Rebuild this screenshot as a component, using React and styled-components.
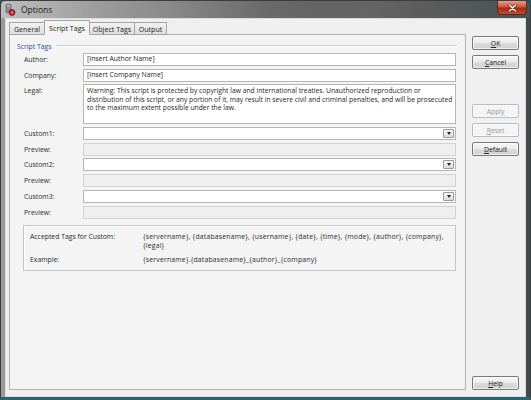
import React from "react";
import styled, { createGlobalStyle } from "styled-components";

const GlobalStyle = createGlobalStyle`
    html, body {
        margin: 0;
        padding: 0;
        background: #1f5b66;
    }
    body {
        font-family: 'Open Sans', 'Liberation Sans', Arial, sans-serif;
        font-size: 6.85px;
        color: #1e1e1e;
    }
`

const Window = styled.div`
    width: 531px;
    height: 400px;
    box-sizing: border-box;
    display: flex;
    flex-direction: column;
    border-radius: 5px 5px 0 0;
    border: 1px solid #3c3c3c;
    border-bottom: 3px solid #2a6470;
    background: linear-gradient(90deg, #9a9a9a 0%, #7d7d7d 30%, #555 60%, #4a4a4a 80%, #3e4a4c 100%);
    overflow: hidden;
`
const TitleBar = styled.div`
    height: 17px;
    display: flex;
    align-items: center;
    padding-left: 4px;
    background: linear-gradient(90deg, rgba(255,255,255,0.35) 0%, rgba(255,255,255,0.15) 20%, rgba(255,255,255,0.05) 50%, rgba(255,255,255,0.12) 70%, rgba(255,255,255,0.05) 100%);
`
const Title = styled.span`
    font-size: 8.5px;
    color: #1a1a1a;
    margin-left: 5px;
`
const CloseButton = styled.div`
    margin-left: auto;
    margin-right: 3px;
    align-self: flex-start;
    width: 28px;
    height: 13px;
    border: 1px solid #5a2a20;
    border-top: none;
    border-radius: 0 0 4px 4px;
    background: linear-gradient(180deg, #e3a08e 0%, #c9553c 45%, #a82a12 55%, #c44a2c 100%);
    display: flex;
    align-items: center;
    justify-content: center;
`
const Client = styled.div`
    flex: 1;
    display: flex;
    margin: 0 4px;
    background: #f0f0f0;
    border: 1px solid #dcdcdc;
    padding: 1px 6px 6px 3px;
`
const Main = styled.div`
    width: 459px;
    display: flex;
    flex-direction: column;
`
const TabStrip = styled.div`
    display: flex;
    align-items: flex-end;
    height: 15px;
    position: relative;
    z-index: 1;
    margin-bottom: -1px;
`
const Tab = styled.div`
    box-sizing: border-box;
    height: ${p => (p.$active ? "15px" : "13px")};
    width: ${p => p.$w}px;
    display: flex;
    align-items: center;
    justify-content: center;
    border: 1px solid #a3a3a3;
    border-bottom: ${p => (p.$active ? "1px solid #f4f4f4" : "1px solid #a3a3a3")};
    margin-left: ${p => (p.$first ? 0 : "-1px")};
    background: ${p => (p.$active ? "#f4f4f4" : "linear-gradient(180deg, #f2f2f2, #dedede)")};
    color: #222;
    font-size: 7.1px;
    z-index: ${p => (p.$active ? 2 : 1)};
`
const Panel = styled.div`
    flex: 1;
    border: 1px solid #b1b1b1;
    background: #f4f4f4;
    padding: 6px 9px 0 7px;
`
const GroupHeader = styled.div`
    display: flex;
    align-items: center;
    height: 10px;
    color: #2d4aa6;
    &::after {
        content: "";
        flex: 1;
        height: 1px;
        margin-left: 4px;
        margin-right: -1px;
        background: #d0d0d0;
        border-bottom: 1px solid #fff;
    }
`
const FieldGrid = styled.div`
    display: grid;
    grid-template-columns: 59px 1fr;
    row-gap: 2.7px;
    margin-top: 2px;
    padding-left: 7px;
`
const Label = styled.div`
    display: flex;
    align-items: ${p => (p.$top ? "flex-start" : "center")};
    padding-top: ${p => (p.$top ? "2px" : 0)};
    color: #2a2a2a;
`
const TextBox = styled.div`
    box-sizing: border-box;
    height: ${p => p.$h || 13}px;
    border: 1px solid ${p => (p.$disabled ? "#d3d3d3" : "#b5b5b5")};
    background: ${p => (p.$disabled ? "#efefef" : "#fff")};
    padding: ${p => (p.$multi ? "2px 2px 2px 3px" : "0 3px")};
    font-size: ${p => (p.$multi ? "6.75px" : "inherit")};
    display: flex;
    align-items: ${p => (p.$multi ? "flex-start" : "center")};
    line-height: 8.5px;
    position: relative;
`
const DropButton = styled.div`
    position: absolute;
    right: 1px;
    top: 1px;
    bottom: 1px;
    width: 11px;
    box-sizing: border-box;
    border: 1px solid #9a9a9a;
    border-radius: 1px;
    background: linear-gradient(180deg, #f6f6f6, #dcdcdc);
    display: flex;
    align-items: center;
    justify-content: center;
    &::after {
        content: "";
        border-left: 2.5px solid transparent;
        border-right: 2.5px solid transparent;
        border-top: 3px solid #222;
    }
`
const TagBox = styled.div`
    margin: 6px 0 0 6px;
    border: 1px solid #c6c6c6;
    box-shadow: inset 1px 1px 0 #fff;
    padding: 6px 7px 6px 6px;
    display: grid;
    grid-template-columns: 113px 305px;
    row-gap: 5px;
    line-height: 9px;
    color: #2a2a2a;
`
const TagValue = styled.div`
    letter-spacing: 0.2px;
`
const ButtonColumn = styled.div`
    width: 47px;
    margin-left: 6px;
    padding-top: 16px;
    display: flex;
    flex-direction: column;
    gap: 5px;
`
const Button = styled.div`
    box-sizing: border-box;
    height: 14px;
    border: 1px solid ${p => (p.$disabled ? "#b9bcbf" : "#777")};
    border-radius: 2px;
    background: ${p => (p.$disabled ? "#f4f4f4" : "linear-gradient(180deg, #f6f6f6 0%, #ebebeb 50%, #dcdcdc 51%, #cfcfcf 100%)")};
    box-shadow: inset 0 0 0 1px rgba(255,255,255,0.7);
    color: ${p => (p.$disabled ? "#9a9a9a" : "#222")};
    display: flex;
    align-items: center;
    justify-content: center;
    margin-top: ${p => p.$mt || 0}px;
    u { text-decoration-thickness: 0.5px; text-underline-offset: 1px; }
`

const AppIcon = () => (
    <svg width="11" height="12" viewBox="0 0 11 12">
        <rect x="1" y="0.5" width="5" height="8" rx="1" fill="#8a8a9a" stroke="#4a4a5a" strokeWidth="0.6" />
        <rect x="2" y="1.5" width="3" height="1" fill="#e6e6ee" />
        <circle cx="7" cy="8.5" r="3" fill="#c0202a" stroke="#6a1014" strokeWidth="0.6" />
        <circle cx="7" cy="8.5" r="1" fill="#f2c0c0" />
    </svg>
)

const CloseIcon = () => (
    <svg width="9" height="8" viewBox="0 0 9 8">
        <path d="M1.5 1 L7.5 7 M7.5 1 L1.5 7" stroke="#5a1a10" strokeWidth="2.6" strokeLinecap="round" />
        <path d="M1.5 1 L7.5 7 M7.5 1 L1.5 7" stroke="#fff" strokeWidth="1.5" strokeLinecap="round" />
    </svg>
)

const tabs = [
    { name: "General", w: 36 },
    { name: "Script Tags", w: 46, active: true },
    { name: "Object Tags", w: 46 },
    { name: "Output", w: 33 },
]

const legalText =
    "Warning: This script is protected by copyright law and international treaties. Unauthorized reproduction or distribution of this script, or any portion of it, may result in severe civil and criminal penalties, and will be prosecuted to the maximum extent possible under the law."

const App = () => {
    return (
        <>
            <GlobalStyle />
            <Window>
                <TitleBar>
                    <AppIcon />
                    <Title>Options</Title>
                    <CloseButton><CloseIcon /></CloseButton>
                </TitleBar>
                <Client>
                    <Main>
                        <TabStrip>
                            {tabs.map((t, i) => (
                                <Tab key={t.name} $w={t.w} $active={t.active} $first={i === 0}>{t.name}</Tab>
                            ))}
                        </TabStrip>
                        <Panel>
                            <GroupHeader>Script Tags</GroupHeader>
                            <FieldGrid>
                                <Label>Author:</Label>
                                <TextBox>[Insert Author Name]</TextBox>
                                <Label>Company:</Label>
                                <TextBox>[Insert Company Name]</TextBox>
                                <Label $top>Legal:</Label>
                                <TextBox $multi $h={40}>{legalText}</TextBox>
                                {[1, 2, 3].map(n => (
                                    <React.Fragment key={n}>
                                        <Label>Custom{n}:</Label>
                                        <TextBox><DropButton /></TextBox>
                                        <Label>Preview:</Label>
                                        <TextBox $disabled />
                                    </React.Fragment>
                                ))}
                            </FieldGrid>
                            <TagBox>
                                <div>Accepted Tags for Custom:</div>
                                <TagValue>{"{servername}, {databasename}, {username}, {date}, {time}, {mode}, {author}, {company}, {legal}"}</TagValue>
                                <div>Example:</div>
                                <TagValue>{"{servername}.{databasename}_{author}_{company}"}</TagValue>
                            </TagBox>
                        </Panel>
                    </Main>
                    <ButtonColumn>
                        <Button><u>O</u>K</Button>
                        <Button><u>C</u>ancel</Button>
                        <Button $disabled $mt={30}>Appl<u>y</u></Button>
                        <Button $disabled><u>R</u>eset</Button>
                        <Button><u>D</u>efault</Button>
                        <Button style={{ marginTop: "auto" }}><u>H</u>elp</Button>
                    </ButtonColumn>
                </Client>
            </Window>
        </>
    );
};

export default App;
